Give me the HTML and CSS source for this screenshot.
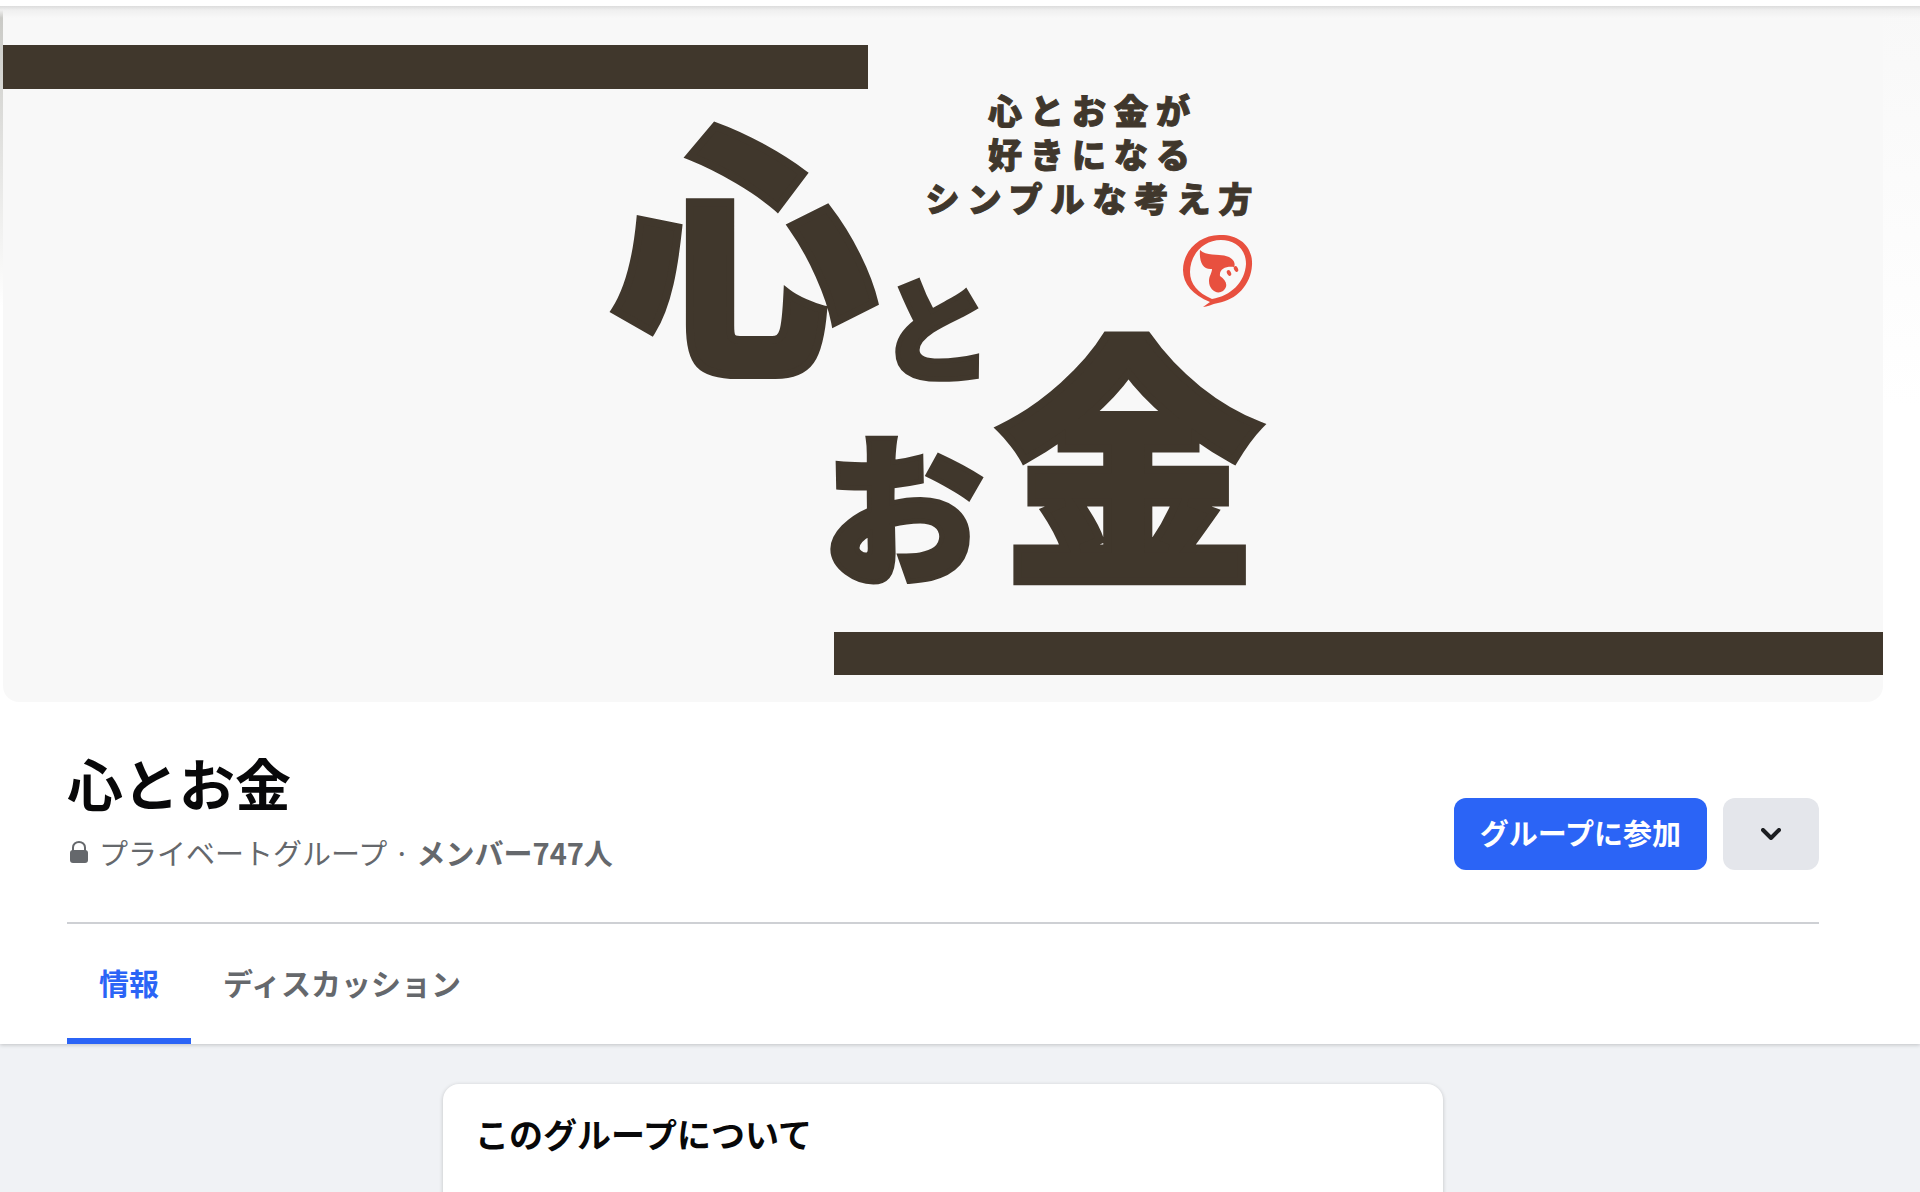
FILE: index.html
```
<!DOCTYPE html>
<html lang="ja">
<head>
    <meta charset="UTF-8">
    <meta name="viewport" content="width=device-width, initial-scale=1.0">
    <title>心とお金</title>
    <link rel="stylesheet" href="styles.css">
</head>
<body>
    <header class="group-header">
        <div class="cover">
            <svg class="cover-art" viewBox="0 0 1880 696" role="img" aria-label="心とお金">
                <rect class="ink" x="0" y="39" width="865" height="44"/>
                <rect class="ink" x="831" y="626" width="1049" height="43"/>
                <g class="logo-text">
                    <text class="kanji" x="609" y="346">心</text>
                    <text x="876" y="367" font-size="114">と</text>
                    <text x="819" y="566" font-size="162">お</text>
                    <text class="kanji" x="994" y="557">金</text>
                </g>
                <g class="tagline">
                    <text x="1090" y="118">心とお金が</text>
                    <text x="1090" y="162">好きになる</text>
                    <text x="1090" y="206">シンプルな考え方</text>
                </g>
                <!-- 赤い印 -->
                <g transform="translate(1157 214)" fill="#e8503f">
                    <path d="M43 87 L50 82 C33 75 23 64 23 50 C23 30 41 14 61 15 C80 15 93 27 92 45 C91 65 76 80 58 83 C52 84 47 87 43 87 Z M52 79 C71 76 85 62 86 44 C86 28 74 20 61 20 C43 20 30 35 30 52 C30 64 38 73 52 79 Z" fill-rule="evenodd"/>
                    <path d="M40 30 C47 37 60 33 69 37 C73 39 76 43 74 47 C66 46 59 49 60 56 C66 60 69 66 63 71 C57 75 49 70 49 61 C49 56 52 53 52 49 C43 50 39 42 40 30 Z"/>
                    <ellipse cx="69" cy="53" rx="2" ry="3" transform="rotate(-25 69 53)"/>
                    <ellipse cx="76" cy="49" rx="2" ry="3" transform="rotate(-25 76 49)"/>
                </g>
            </svg>
        </div>
        <div class="group-info">
            <div class="group-title">
                <h1>心とお金</h1>
                <p class="group-meta">
                    <svg class="lock" viewBox="0 0 20 22" aria-hidden="true">
                        <path d="M4 10V6.500a6 5.500 0 0 1 12 0V10" fill="none" stroke="currentColor" stroke-width="2"/>
                        <rect x="1" y="9" width="18" height="13" rx="3" fill="currentColor"/>
                    </svg>
                    <span>プライベートグループ · <a href="#">メンバー747人</a></span>
                </p>
            </div>
            <div class="actions">
                <button type="button" class="btn btn-join">グループに参加</button>
                <button type="button" class="btn btn-more" aria-label="その他">
                    <svg viewBox="0 0 20 12" aria-hidden="true">
                        <path d="M2 2l8 8 8-8"/>
                    </svg>
                </button>
            </div>
        </div>
        <nav class="tabs">
            <a href="#" class="tab active">情報</a>
            <a href="#" class="tab">ディスカッション</a>
        </nav>
    </header>
    <main class="content">
        <section class="card">
            <h2>このグループについて</h2>
        </section>
    </main>
</body>
</html>
```
FILE: styles.css
```
* {
    box-sizing: border-box;
}
body {
    font-family: "Noto Sans CJK JP", sans-serif;
    margin: 0;
    color: #080809;
    background-color: #f0f2f5;
    overflow: hidden;
}
h1, h2, p {
    margin: 0;
}
a {
    color: inherit;
    text-decoration: none;
}
.group-header {
    padding: 6px 37px 0 3px;
    background-color: #fff;
    background-image:
        linear-gradient(#dcdcdc, #efefef 4px, rgba(247,247,247,0)),
        linear-gradient(#c8c8c4, #fff),
        linear-gradient(#f8f8f8, #fff);
    background-position: 0 6px, 0 6px, 100% 6px;
    background-size: 100% 12px, 3px 300px, 37px 400px;
    background-repeat: no-repeat;
    box-shadow: 0 1px 4px rgba(0,0,0,0.2);
}

/* カバー */
.cover {
    background: linear-gradient(#dcdcdc, #efefef 4px, #f8f8f8 12px);
    border-radius: 0 0 16px 16px;
    overflow: hidden;
}
.cover-art {
    display: block;
    width: 100%;
}
.ink, .logo-text, .tagline {
    fill: #40372c;
}
.logo-text, .tagline {
    font-weight: 900;
    stroke: #40372c;
}
.logo-text {
    stroke-width: 5px;
}
.kanji {
    font-size: 265px;
    stroke-width: 8px;
}
.tagline {
    font-size: 34px;
    letter-spacing: 8px;
    text-anchor: middle;
    stroke-width: 1px;
}

/* グループ名 */
.group-info {
    display: flex;
    justify-content: space-between;
    align-items: center;
    margin: 0 64px;
    padding: 40px 0;
    border-bottom: 2px solid #ced0d4;
}
h1 {
    font-size: 56px;
    line-height: 80px;
}
.group-meta {
    display: flex;
    align-items: center;
    gap: 10px;
    padding-left: 2px;
    font-size: 29px;
    line-height: 60px;
    color: #65686c;
}
.group-meta a {
    font-weight: bold;
}
.lock {
    width: 20px;
    height: 22px;
}
.actions {
    display: flex;
    gap: 16px;
    padding-top: 44px;
}
.btn {
    height: 72px;
    border: none;
    border-radius: 12px;
    font: bold 29px "Noto Sans CJK JP", sans-serif;
    cursor: pointer;
}
.btn-join {
    padding: 0 26px 4px;
    color: #fff;
    background: #2b64f6;
}
.btn-more {
    width: 96px;
    padding: 0;
    background: #e4e6eb;
}
.btn-more svg {
    display: block;
    width: 20px;
    height: 12px;
    margin: 0 auto;
    fill: none;
    stroke: #1c1e21;
    stroke-width: 4;
    stroke-linecap: round;
    stroke-linejoin: round;
}

/* タブ */
.tabs {
    display: flex;
    margin: 0 64px;
}
.tab {
    height: 120px;
    padding: 0 32px;
    font-size: 30px;
    font-weight: bold;
    line-height: 116px;
    color: #65686c;
}
.tab.active {
    color: #2b64f6;
    box-shadow: inset 0 -6px #2b64f6;
    border-radius: 2px 2px 0 0;
}

.content {
    padding: 40px 37px 0 3px;
}
.card {
    max-width: 1000px;
    min-height: 320px;
    margin: 0 auto;
    padding: 26px 32px;
    background: #fff;
    border-radius: 16px;
    box-shadow: 0 1px 4px rgba(0,0,0,0.2);
}
h2 {
    font-size: 34px;
    line-height: 48px;
}
```
